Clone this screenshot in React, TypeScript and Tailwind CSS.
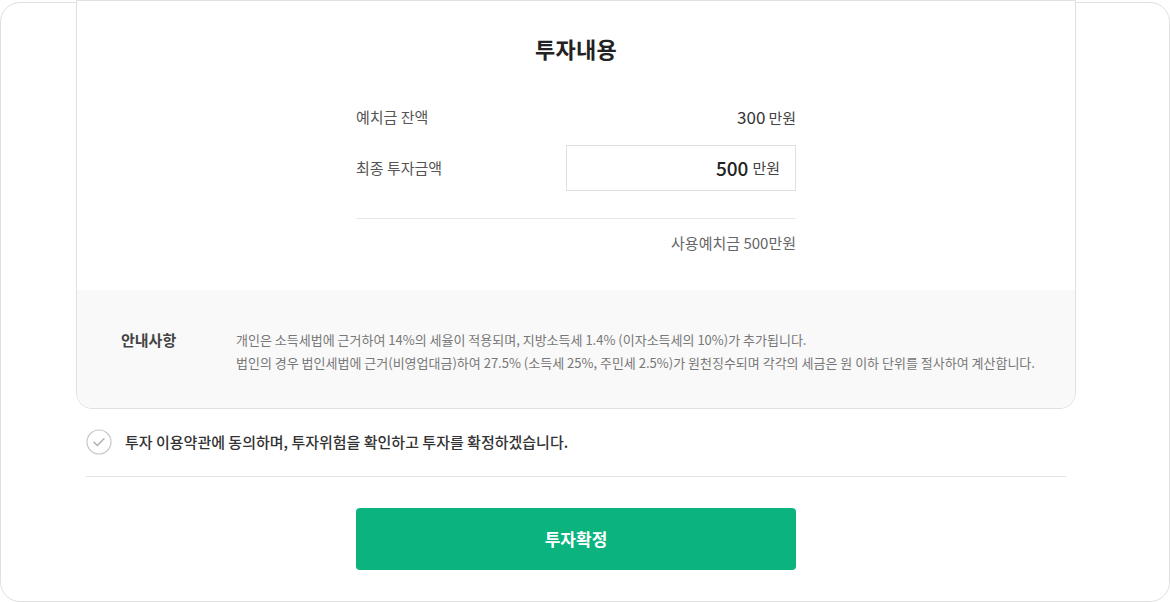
import React from 'react'

const FONT = { fontFamily: '"Noto Sans CJK KR", "Noto Sans", sans-serif' }

function CheckCircle() {
  return (
    <svg width="26" height="26" viewBox="0 0 26 26" fill="none">
      <circle cx="13" cy="13" r="12" stroke="#c8c8c8" strokeWidth="1.2" fill="#fff" />
      <path d="M8 13.2l3.3 3.3L18 9.8" stroke="#b0b0b0" strokeWidth="1.5" strokeLinecap="round" strokeLinejoin="round" />
    </svg>
  )
}

export default function App() {
  return (
    <div style={FONT} className="w-[1170px] h-[602px] bg-white pt-[2px] text-[#333]">
      <div className="h-[600px] rounded-[20px] border border-[#e0e0e0] bg-white">
        <div className="ml-[75px] w-[1000px]">
          <div className="-mt-[3px] rounded-b-[16px] border border-[#e0e0e0] bg-white overflow-hidden">
            <div className="pt-[32px] h-[62px] text-center text-[22px] leading-[30px] font-bold tracking-[0.3px] text-[#222]">
              투자내용
            </div>

            <div className="mx-auto w-[440px]">
              <div className="mt-[39px] flex h-[30px] items-center justify-between">
                <span className="text-[15px] text-[#555]">예치금 잔액</span>
                <span className="flex items-baseline gap-[3px]">
                  <span className="text-[17px] text-[#333]">300</span>
                  <span className="text-[15px] text-[#444]">만원</span>
                </span>
              </div>

              <div className="mt-[13px] flex h-[46px] items-center justify-between">
                <span className="text-[15px] text-[#555]">최종 투자금액</span>
                <div className="flex h-[46px] w-[230px] items-center justify-end gap-[4px] border border-[#e0e0e0] pr-[15px]">
                  <span className="text-[19px] font-medium text-[#222]">500</span>
                  <span className="text-[15px] text-[#444]">만원</span>
                </div>
              </div>

              <div className="mt-[27px] h-px bg-[#e8e8e8]" />

              <div className="mt-[14px] flex h-[20px] items-center justify-end text-[15px] text-[#666]">
                사용예치금 500만원
              </div>
            </div>

            <div className="mt-[37px] flex h-[118px] bg-[#f9f9f9] pl-[44px] pt-[38px]">
              <div className="w-[115px] text-[15px] leading-[23px] font-bold text-[#444]">안내사항</div>
              <div className="text-[13px] leading-[23px] text-[#777]">
                <p>개인은 소득세법에 근거하여 14%의 세율이 적용되며, 지방소득세 1.4% (이자소득세의 10%)가 추가됩니다.</p>
                <p>법인의 경우 법인세법에 근거(비영업대금)하여 27.5% (소득세 25%, 주민세 2.5%)가 원천징수되며 각각의 세금은 원 이하 단위를 절사하여 계산합니다.</p>
              </div>
            </div>
          </div>

          <div className="mx-[10px]">
            <div className="mt-[20px] flex h-[26px] items-center gap-[13px]">
              <CheckCircle />
              <span className="text-[15px] font-medium text-[#333]">
                투자 이용약관에 동의하며, 투자위험을 확인하고 투자를 확정하겠습니다.
              </span>
            </div>
            <div className="mt-[21px] h-px bg-[#e5e5e5]" />
          </div>

          <div className="mt-[31px] flex justify-center">
            <button className="h-[62px] w-[440px] rounded-[4px] bg-[#0bb47f] text-[17px] font-bold text-white">
              투자확정
            </button>
          </div>
        </div>
      </div>
    </div>
  )
}
